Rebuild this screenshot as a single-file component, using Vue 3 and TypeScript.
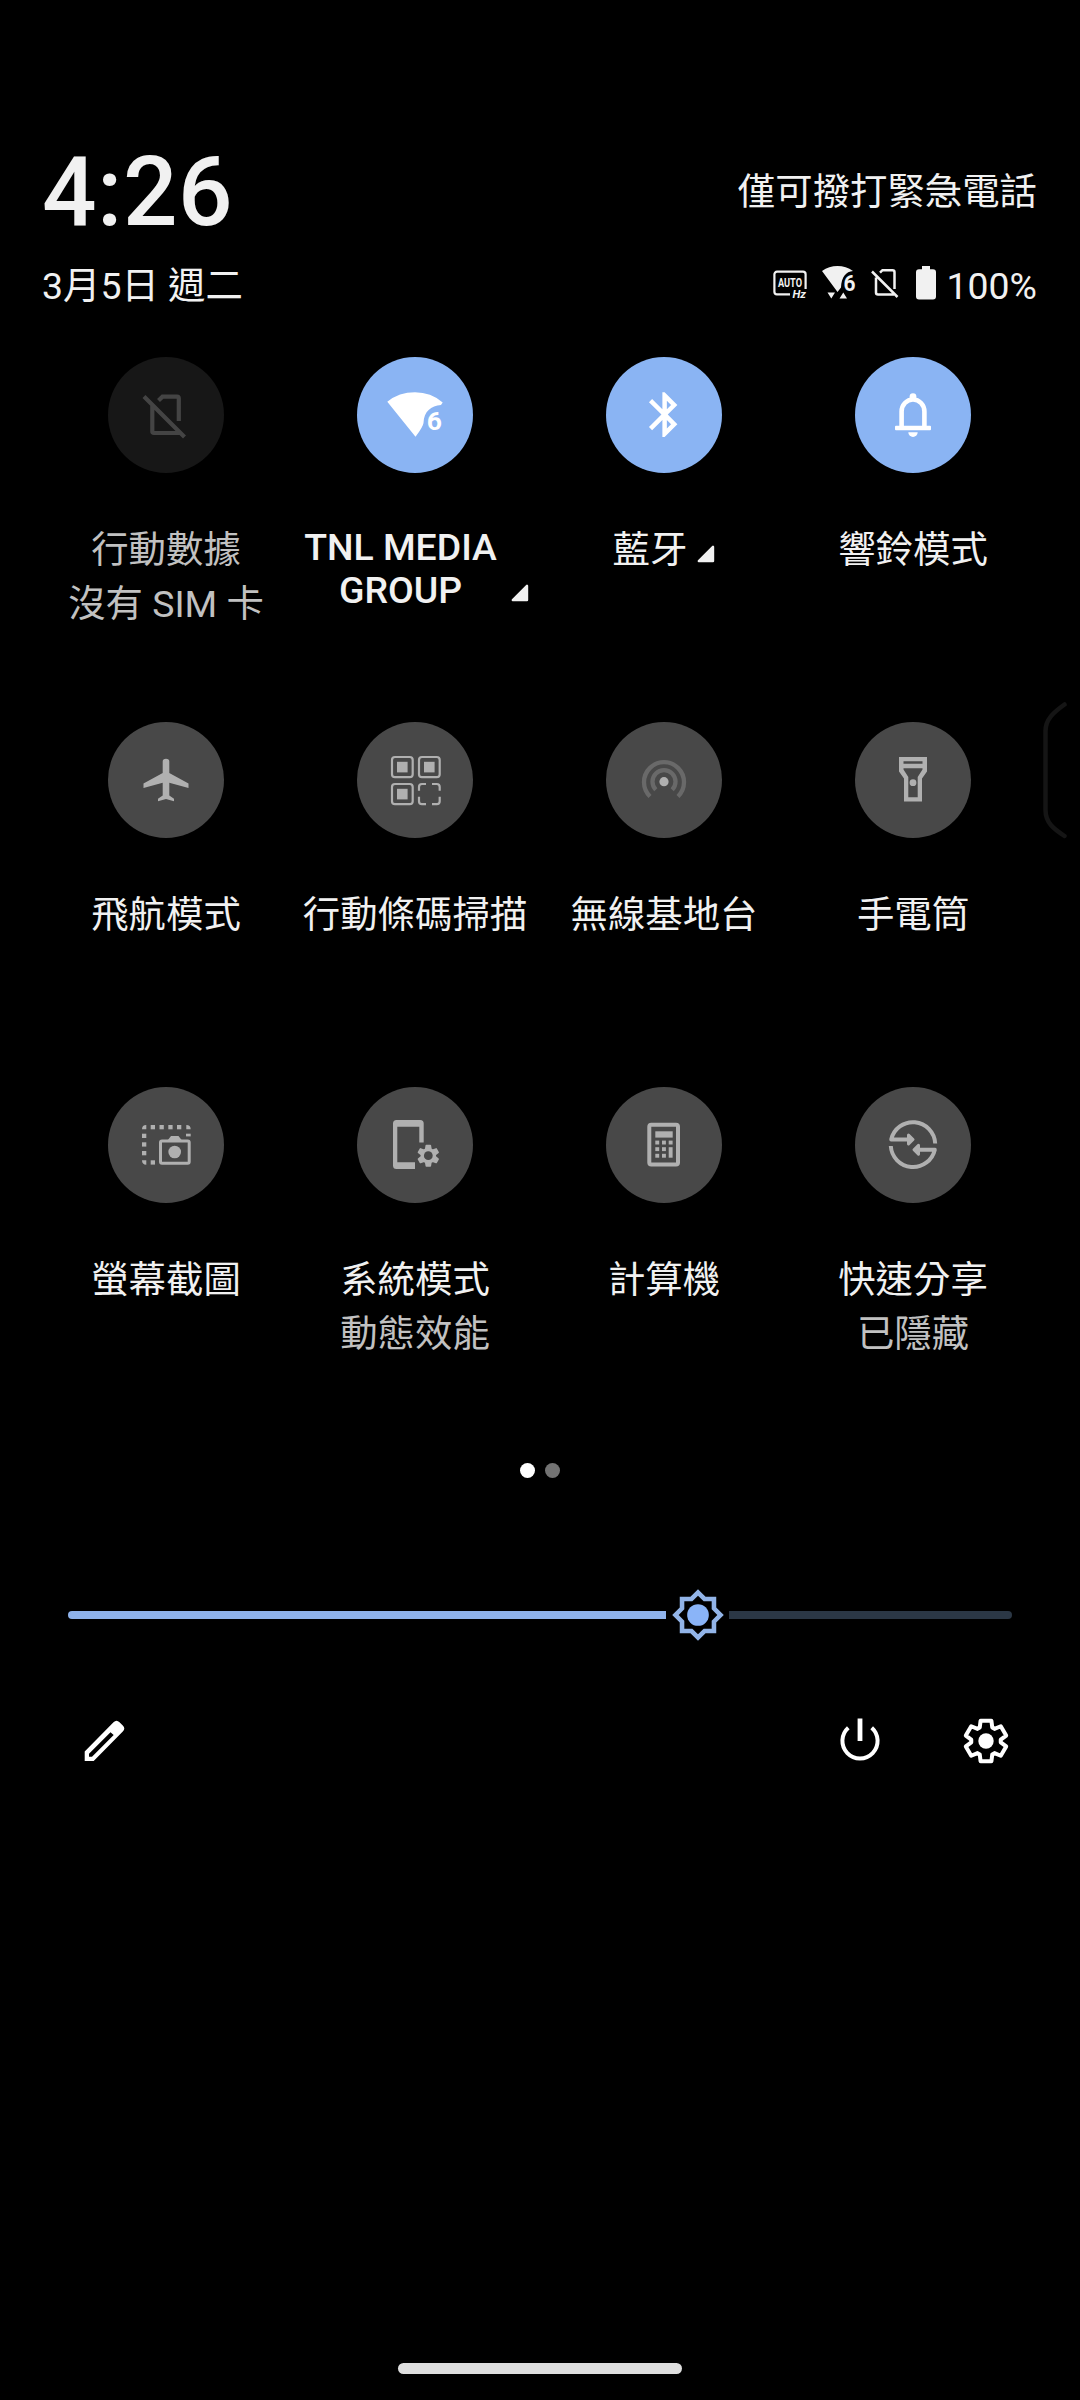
<script setup lang="ts">
interface Tile {
  icon: string
  title: string[]
  subtitle?: string
  state: 'on' | 'off' | 'disabled'
  expandable?: boolean
  latin?: boolean
}

const tiles: Tile[] = [
  { icon: 'sim', title: ['行動數據'], subtitle: '沒有 SIM 卡', state: 'disabled' },
  { icon: 'wifi', title: ['TNL MEDIA', 'GROUP'], state: 'on', expandable: true, latin: true },
  { icon: 'bluetooth', title: ['藍牙'], state: 'on', expandable: true },
  { icon: 'bell', title: ['響鈴模式'], state: 'on' },
  { icon: 'plane', title: ['飛航模式'], state: 'off' },
  { icon: 'qr', title: ['行動條碼掃描'], state: 'off' },
  { icon: 'hotspot', title: ['無線基地台'], state: 'off' },
  { icon: 'torch', title: ['手電筒'], state: 'off' },
  { icon: 'capture', title: ['螢幕截圖'], state: 'off' },
  { icon: 'system', title: ['系統模式'], subtitle: '動態效能', state: 'off' },
  { icon: 'calculator', title: ['計算機'], state: 'off' },
  { icon: 'share', title: ['快速分享'], subtitle: '已隱藏', state: 'off' },
]

const qrCells = [[35, 35], [62, 35], [35, 62]]
const captureDots = [
  [42.7, 38], [51.5, 38], [60.3, 38], [69, 38],
  [34, 46.7], [34, 55.3], [34, 64], [42.7, 73.3],
]
const calcKeys = [
  [49.3, 53.6], [56, 53.6], [62.7, 53.6],
  [49.3, 60.2], [56, 60.2],
  [49.3, 66.8], [56, 66.8],
]

// Six-toothed cog outline around (cx, cy)
function cog(cx: number, cy: number, outer: number, outerDeg: number, inner: number, innerDeg: number): string {
  const points: string[] = []
  const add = (radius: number, deg: number) => {
    const a = (deg * Math.PI) / 180
    points.push(`${(cx + radius * Math.sin(a)).toFixed(2)} ${(cy - radius * Math.cos(a)).toFixed(2)}`)
  }
  for (let i = 0; i < 6; i++) {
    const c = i * 60
    add(inner, c - innerDeg)
    add(outer, c - outerDeg)
    add(outer, c + outerDeg)
    add(inner, c + innerDeg)
  }
  return `M${points.join('L')}Z`
}

const smallCog = cog(71.3, 68.7, 10.4, 11, 7, 22)
const largeCog = cog(24, 24, 20.9, 15, 14.8, 25)
</script>

<template>
  <main class="shade">
    <header>
      <div class="row clock-row">
        <span class="clock">4:26</span>
        <span class="carrier">僅可撥打緊急電話</span>
      </div>
      <div class="row date-row">
        <span>3月5日 週二</span>
        <div class="status">
          <svg class="s-hz" width="36" height="36" viewBox="0 0 36 36">
            <path d="M18 29.3H5a2.6 2.6 0 0 1-2.6-2.6V9.3A2.6 2.6 0 0 1 5 6.700h26a2.600 2.600 0 0 1 2.600 2.600V24" fill="none" stroke="currentColor" stroke-width="2.200" />
            <text x="6" y="21.700" font-size="12.200" font-weight="700" textLength="24" lengthAdjust="spacingAndGlyphs">AUTO</text>
            <text x="20.500" y="33.400" font-size="10.500" font-weight="700" font-style="italic" textLength="13.500" lengthAdjust="spacingAndGlyphs">Hz</text>
          </svg>
          <svg class="s-wifi" width="36" height="36" viewBox="0 0 36 36">
            <path d="M1 6Q8 1 16.500 1T32 6C25 6.500 20.500 12 20 22.500L16.500 27Z" />
            <path d="M6.500 27.500h7.500l-3.700 6zM18.500 33.500h7.500l-3.700-6z" />
            <text x="22.500" y="26.300" font-size="22" font-weight="700" textLength="12" lengthAdjust="spacingAndGlyphs">6</text>
          </svg>
          <svg class="s-sim" width="30" height="36" viewBox="0 0 30 36" fill="none" stroke="currentColor" stroke-width="2.500">
            <path d="M2 6.500L27.500 32M10 7.700l2.500-2.500H22.500q2 0 2 2V24M6 12.500V27.500q0 2 2 2H24" />
          </svg>
          <svg class="s-bat" width="20" height="36" viewBox="0 0 20 36">
            <path d="M6 1h8v3.300h3a3 3 0 0 1 3 3V31.500a3 3 0 0 1-3 3H3a3 3 0 0 1-3-3V7.300a3 3 0 0 1 3-3h3z" />
          </svg>
          <span>100%</span>
        </div>
      </div>
    </header>

    <section class="tiles">
      <div v-for="tile in tiles" :key="tile.icon" class="tile" :class="tile.state">
        <div class="disc">
          <svg width="116" height="116" viewBox="0 0 116 116" fill="currentColor">
            <g v-if="tile.icon === 'sim'" fill="none" stroke="currentColor" stroke-width="4.200">
              <path d="M36 39.500L76.500 80M50.500 43.500L54.500 39.700H69Q70.800 39.700 70.800 41.500V64M44.300 47V74.300Q44.300 76 46 76H72" />
            </g>
            <g v-else-if="tile.icon === 'wifi'">
              <path d="M30.300 44.700Q42 35.300 58 35.300T85.700 45.500L84 48C74 49 67 54 66.500 66Q66 70 58.500 79.700Z" />
              <text x="69.700" y="73" font-size="26.500" font-weight="700">6</text>
            </g>
            <path v-else-if="tile.icon === 'bluetooth'" transform="translate(31.800 30.800) scale(2.235)" d="M17.710 7.710L12 2h-1v7.590L6.410 5 5 6.410 10.590 12 5 17.590 6.410 19 11 14.410V22h1l5.710-5.710-4.300-4.290zM13 5.830l1.880 1.880L13 9.590zM14.880 16.290L13 18.170v-3.760z" />
            <g v-else-if="tile.icon === 'bell'">
              <path d="M46.600 71V54.500a11.400 12 0 0 1 22.800 0V71" fill="none" stroke="currentColor" stroke-width="4.600" />
              <circle cx="58" cy="39.700" r="3.400" />
              <rect x="40" y="68.700" width="36" height="4.500" rx="1" />
              <path d="M53.300 75.200h9.400a4.700 4.700 0 0 1-9.400 0z" />
            </g>
            <path v-else-if="tile.icon === 'plane'" d="M54.700 39.500Q54.700 36.700 58 36.700T61.300 39.500V51L80.500 61.500V66L61.300 60.700V73.500L66 76.700V79.300L58 77L50 79.300V76.700L54.700 73.500V60.700L35.500 66V61.500L54.700 51Z" />
            <g v-else-if="tile.icon === 'qr'">
              <template v-for="(c, i) in qrCells" :key="i">
                <rect :x="c[0]" :y="c[1]" width="20.700" height="20.200" rx="3" fill="none" stroke="currentColor" stroke-width="2.200" />
                <rect :x="c[0] + 5" :y="c[1] + 4.800" width="10.600" height="10.600" />
              </template>
              <path d="M62 68.700V65q0-3 3-3h4M75 62h4.700q3 0 3 3v3.700M82.700 74.700v4.500q0 3-3 3H75M69 82.200h-4q-3 0-3-3v-4.500" fill="none" stroke="currentColor" stroke-width="2.200" />
            </g>
            <g v-else-if="tile.icon === 'hotspot'">
              <path d="M44 74.500A20 20 0 1 1 72 74.500M49.800 67.700A11.500 11.500 0 1 1 66.200 67.700" fill="none" stroke="#696969" stroke-width="4.300" />
              <circle cx="58" cy="59.700" r="4.600" />
            </g>
            <path v-else-if="tile.icon === 'torch'" fill-rule="evenodd" d="M44 35H72V49.500L67 56.500V79.500H49V56.500L44 49.500ZM48.500 39.300V41.800H67.500V39.300ZM48.500 46.300V47.500L53.300 55V75.300H62.700V55L67.500 47.500V46.300ZM58 57.300a3.400 3.400 0 1 1 0 6.800a3.400 3.400 0 1 1 0-6.800z" />
            <g v-else-if="tile.icon === 'capture'">
              <rect v-for="(d, i) in captureDots" :key="i" :x="d[0]" :y="d[1]" width="4.300" height="4.300" />
              <path d="M34 42.300Q34 38 38.300 38V42.300ZM78.300 38Q82.700 38 82.700 42.300H78.300ZM34 73.300H38.300V77.700Q34 77.700 34 73.300Z" />
              <rect x="78" y="46.700" width="4.700" height="2.700" />
              <rect x="52.500" y="53.900" width="28.700" height="22.300" rx="1.500" fill="none" stroke="currentColor" stroke-width="3" />
              <path d="M59.500 53.500L63 49h7.500l3.500 4.500z" />
              <circle cx="66.700" cy="65" r="6.300" />
            </g>
            <g v-else-if="tile.icon === 'system'">
              <path d="M58 82H39.500A3.500 3.500 0 0 1 36 78.500V36.500A3.500 3.500 0 0 1 39.500 33H63.200A3.500 3.500 0 0 1 66.700 36.500V55.500H62.300V39.700H40.300V75.300H58Z" />
              <path :d="smallCog" stroke="currentColor" stroke-width="1.600" stroke-linejoin="round" />
              <circle class="hole" cx="71.300" cy="68.700" r="4.400" />
            </g>
            <g v-else-if="tile.icon === 'calculator'">
              <rect x="43.300" y="37.700" width="28.700" height="39.700" rx="2" fill="none" stroke="currentColor" stroke-width="4" />
              <rect x="49.300" y="44.300" width="17.400" height="6.300" />
              <rect v-for="(k, i) in calcKeys" :key="i" :x="k[0]" :y="k[1]" width="3.900" height="3.900" />
              <rect x="62.700" y="60.200" width="3.900" height="10.500" />
            </g>
            <g v-else fill="none" stroke="currentColor" stroke-width="4" stroke-linejoin="round">
              <path d="M80.200 56.500A22.300 22.300 0 0 0 36.200 52.500H56" />
              <path d="M35.800 59A22.300 22.300 0 0 0 79.800 62.700H60" />
              <path d="M53.500 48L58 52.500L53.500 57ZM63.500 58.200L59 62.700L63.500 67.200Z" stroke-width="3" fill="currentColor" />
            </g>
          </svg>
        </div>
        <div class="label" :class="{ latin: tile.latin }">
          <div class="title">
            <div v-for="line in tile.title" :key="line">{{ line }}</div>
          </div>
          <svg v-if="tile.expandable" class="caret" width="18" height="18" viewBox="0 0 18 18">
            <path d="M1.800 16L16 1.800V16Z" stroke="currentColor" stroke-width="2.400" stroke-linejoin="round" />
          </svg>
        </div>
        <div v-if="tile.subtitle" class="subtitle">{{ tile.subtitle }}</div>
      </div>
    </section>

    <div class="pager"><i class="active"></i><i></i></div>

    <div class="brightness">
      <div class="filled"></div>
      <svg width="52" height="52" viewBox="0.600 0.600 22.800 22.800">
        <path fill-rule="evenodd" d="M20 8.690V4h-4.690L12 .69 8.690 4H4v4.690L.69 12 4 15.310V20h4.690L12 23.310 15.310 20H20v-4.690L23.310 12zM18 14.480V18h-3.520L12 20.480 9.520 18H6v-3.520L3.520 12 6 9.520V6h3.520L12 3.520 14.480 6H18v3.520L20.480 12z" />
        <circle cx="12" cy="12" r="4.750" fill="#8ab4f8" />
      </svg>
      <div class="rest"></div>
    </div>

    <footer class="actions">
      <svg width="48" height="48" viewBox="0 0 48 48">
        <path fill-rule="evenodd" d="M4.700 44V34.500L33.500 5.300Q36.500 2.300 39.500 5.300L42.800 8.500Q45.800 11.500 42.800 14.500L13.700 44ZM9 36.700V39.700H12L33.700 18L30.500 15.200Z" />
      </svg>
      <svg class="power" width="48" height="48" viewBox="0 0 48 48" fill="none" stroke="currentColor">
        <path d="M12.300 10.700A17.600 17.600 0 1 0 35.700 10.700" stroke-width="4" />
        <path d="M24 1.500V24" stroke-width="4.800" />
      </svg>
      <svg width="48" height="48" viewBox="0 0 48 48">
        <path :d="largeCog" fill="none" stroke="currentColor" stroke-width="4" stroke-linejoin="round" />
        <circle cx="24" cy="24" r="7.700" />
      </svg>
    </footer>

    <div class="home-bar"></div>

    <svg class="edge-handle" width="26" height="140" viewBox="0 0 26 140">
      <path d="M22.500 3.500C12 11 3.500 18 3.500 30V109C3.500 122 12 128 22.500 135" fill="none" stroke="#151515" stroke-width="4.500" stroke-linecap="round" />
    </svg>
  </main>
</template>

<style>
body {
  margin: 0;
  background: #000;
}
</style>

<style scoped>
.shade {
  position: relative;
  display: flex;
  flex-direction: column;
  box-sizing: border-box;
  width: 1080px;
  height: 2400px;
  padding-top: 144px;
  overflow: hidden;
  background: #000;
  color: #f1f1f1;
  font-family: Roboto, "Noto Sans CJK TC", sans-serif;
  font-size: 37.4px;
  line-height: 54px;
}
svg {
  display: block;
  flex: none;
  overflow: visible;
  fill: currentColor;
}
svg [fill="none"],
svg[fill="none"] {
  fill: none;
}
header {
  padding: 0 43px 0 42px;
}
.row {
  display: flex;
  justify-content: space-between;
  white-space: nowrap;
}
.clock-row {
  height: 115px;
}
.clock {
  font-size: 96px;
  font-weight: 500;
  line-height: 97px;
  letter-spacing: 0.5px;
}
.carrier {
  margin-top: 21px;
}
.date-row {
  height: 98px;
}
.status {
  display: flex;
  align-items: flex-start;
}
.status svg {
  margin-top: 6px;
}
.s-wifi {
  margin-left: 13px;
}
.s-sim {
  margin-left: 12.5px;
}
.s-bat {
  margin-left: 16px;
  margin-right: 11px;
}
.tiles {
  display: grid;
  grid-template-columns: repeat(4, 249px);
  grid-auto-rows: 365px;
  margin-left: 41.5px;
}
.tile {
  display: flex;
  flex-direction: column;
  align-items: center;
  white-space: nowrap;
}
.disc {
  width: 116px;
  height: 116px;
  margin-bottom: 50px;
  border-radius: 50%;
  background: #484848;
  color: #b0b0b0;
}
.hole {
  fill: #484848;
}
.on .disc {
  background: #8ab4f3;
  color: #fff;
}
.disabled .disc {
  background: #171717;
  color: #444;
}
.label {
  display: flex;
  align-items: flex-end;
  text-align: center;
}
.latin {
  align-self: stretch;
  margin-top: 3px;
  font-weight: 500;
  line-height: 43px;
}
.latin .title {
  flex: 1;
}
.caret {
  margin: 0 0 14px 10px;
}
.latin .caret {
  margin: 0 11px 10px 0;
}
.subtitle,
.disabled .label {
  color: #c1c1c1;
}
.pager {
  display: flex;
  justify-content: center;
  gap: 10px;
  margin-top: 10.5px;
}
.pager i {
  width: 15px;
  height: 15px;
  border-radius: 50%;
  background: #737373;
}
.pager .active {
  background: #fff;
}
.brightness {
  display: flex;
  align-items: center;
  height: 52px;
  margin: 111px 68px 0;
  color: #92b4e8;
}
.filled {
  width: 598px;
  height: 8px;
  margin-right: 5.5px;
  border-radius: 4px 0 0 4px;
  background: #8fb3ec;
}
.rest {
  flex: 1;
  height: 8px;
  margin-left: 5.5px;
  border-radius: 0 4px 4px 0;
  background: #2b3745;
}
.actions {
  display: flex;
  margin: 76px 70px 0 80px;
  color: #fff;
}
.power {
  margin-left: auto;
  margin-right: 78px;
}
.home-bar {
  width: 284px;
  height: 11px;
  margin: auto auto 26px;
  border-radius: 6px;
  background: #dedede;
}
.edge-handle {
  position: absolute;
  top: 701px;
  left: 1042px;
}
</style>
